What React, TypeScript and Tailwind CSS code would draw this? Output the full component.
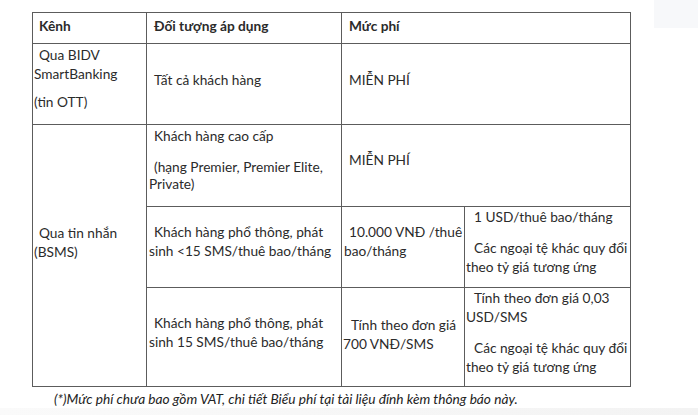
import React from "react";

/**
 * Bảng phí dịch vụ thông báo biến động số dư
 */
const cell = "border border-[#5c5c5c] align-top text-[13.7px] leading-[19px] text-[#2b2b2b]";

const P = ({ children, indent = true, className = "" }: { children: React.ReactNode; indent?: boolean; className?: string }) => (
  <p className={`${indent ? "indent-[5px]" : ""} ${className}`}>{children}</p>
);

const App = () => {
  return (
    <div
      className="relative w-[698px] h-[415px] bg-white flex flex-col overflow-hidden"
      style={{ fontFamily: "Lato, 'Noto Sans', sans-serif" }}
    >
      {/* top-right grey tab */}
      <div className="absolute top-0 right-0 w-[44px] h-[28px] bg-[#f7f8fa]" />

      <div className="pt-[12px] pl-[32px]">
        <table className="border-collapse table-fixed w-[598px]">
          <colgroup>
            <col className="w-[114px]" />
            <col className="w-[195px]" />
            <col className="w-[123px]" />
            <col className="w-[166px]" />
          </colgroup>
          <thead>
            <tr className="h-[31px]">
              <th className={`${cell} font-bold text-left pl-[1px] pt-[3px] text-[#1f1f1f]`}>
                <P>Kênh</P>
              </th>
              <th className={`${cell} font-bold text-left pl-[2px] pt-[3px] text-[#1f1f1f]`}>
                <P>Đối tượng áp dụng</P>
              </th>
              <th colSpan={2} className={`${cell} font-bold text-left pl-[2px] pt-[3px] text-[#1f1f1f]`}>
                <P className="indent-[4px]">Mức phí</P>
              </th>
            </tr>
          </thead>
          <tbody>
            {/* OTT */}
            <tr className="h-[81px]">
              <td className={`${cell} pl-[1px] pt-[1px]`}>
                <P>Qua BIDV<br />SmartBanking</P>
                <P indent={false} className="mt-[9px]">(tin OTT)</P>
              </td>
              <td className={`${cell} pl-[2px] pt-[26px]`}>
                <P>Tất cả khách hàng</P>
              </td>
              <td colSpan={2} className={`${cell} pl-[2px] pt-[26px]`}>
                <P className="indent-[4px]">MIỄN PHÍ</P>
              </td>
            </tr>

            {/* Premier */}
            <tr className="h-[82px]">
              <td rowSpan={3} className={`${cell} pl-[1px] pt-[98px]`}>
                <P>Qua tin nhắn<br /></P>
                <P indent={false}>(BSMS)</P>
              </td>
              <td className={`${cell} pl-[2px] pt-[2px]`}>
                <P className="leading-[17px]">Khách hàng cao cấp</P>
                <P className="leading-[17px] mt-[14px]">(hạng Premier, Premier Elite,<br />Private)</P>
              </td>
              <td colSpan={2} className={`${cell} pl-[2px] pt-[25px]`}>
                <P className="indent-[4px]">MIỄN PHÍ</P>
              </td>
            </tr>

            {/* < 15 SMS */}
            <tr className="h-[81px]">
              <td className={`${cell} pl-[2px] pt-[15px]`}>
                <P>Khách hàng phổ thông, phát<br />sinh &lt;15 SMS/thuê bao/tháng</P>
              </td>
              <td className={`${cell} pl-[2px] pt-[15px]`}>
                <P className="indent-[3px]">10.000 VNĐ /thuê<br />bao/tháng</P>
              </td>
              <td className={`${cell} pl-[1px] pt-[0px]`}>
                <P className="indent-[8px]">1 USD/thuê bao/tháng</P>
                <P className="indent-[8px] mt-[12px]">Các ngoại tệ khác quy đổi<br />theo tỷ giá tương ứng</P>
              </td>
            </tr>

            {/* 15 SMS */}
            <tr className="h-[99px]">
              <td className={`${cell} pl-[2px] pt-[25px]`}>
                <P>Khách hàng phổ thông, phát<br />sinh 15 SMS/thuê bao/tháng</P>
              </td>
              <td className={`${cell} pl-[1px] pt-[27px]`}>
                <P className="indent-[8px]">Tính theo đơn giá<br />700 VNĐ/SMS</P>
              </td>
              <td className={`${cell} pl-[1px] pt-[0px]`}>
                <P className="indent-[8px]">Tính theo đơn giá 0,03<br />USD/SMS</P>
                <P className="indent-[8px] mt-[12px]">Các ngoại tệ khác quy đổi<br />theo tỷ giá tương ứng</P>
              </td>
            </tr>
          </tbody>
        </table>
      </div>

      <p className="pl-[54px] pt-[2px] text-[13.7px] leading-[19px] italic text-[#222]">
        (*)Mức phí chưa bao gồm VAT, chi tiết Biểu phí tại tài liệu đính kèm thông báo này.
      </p>

      {/* bottom grey strip */}
      <div className="mt-auto h-[9px] bg-gradient-to-r from-[#fafafa] to-[#f3f3f3]" />
    </div>
  );
};

export default App;
